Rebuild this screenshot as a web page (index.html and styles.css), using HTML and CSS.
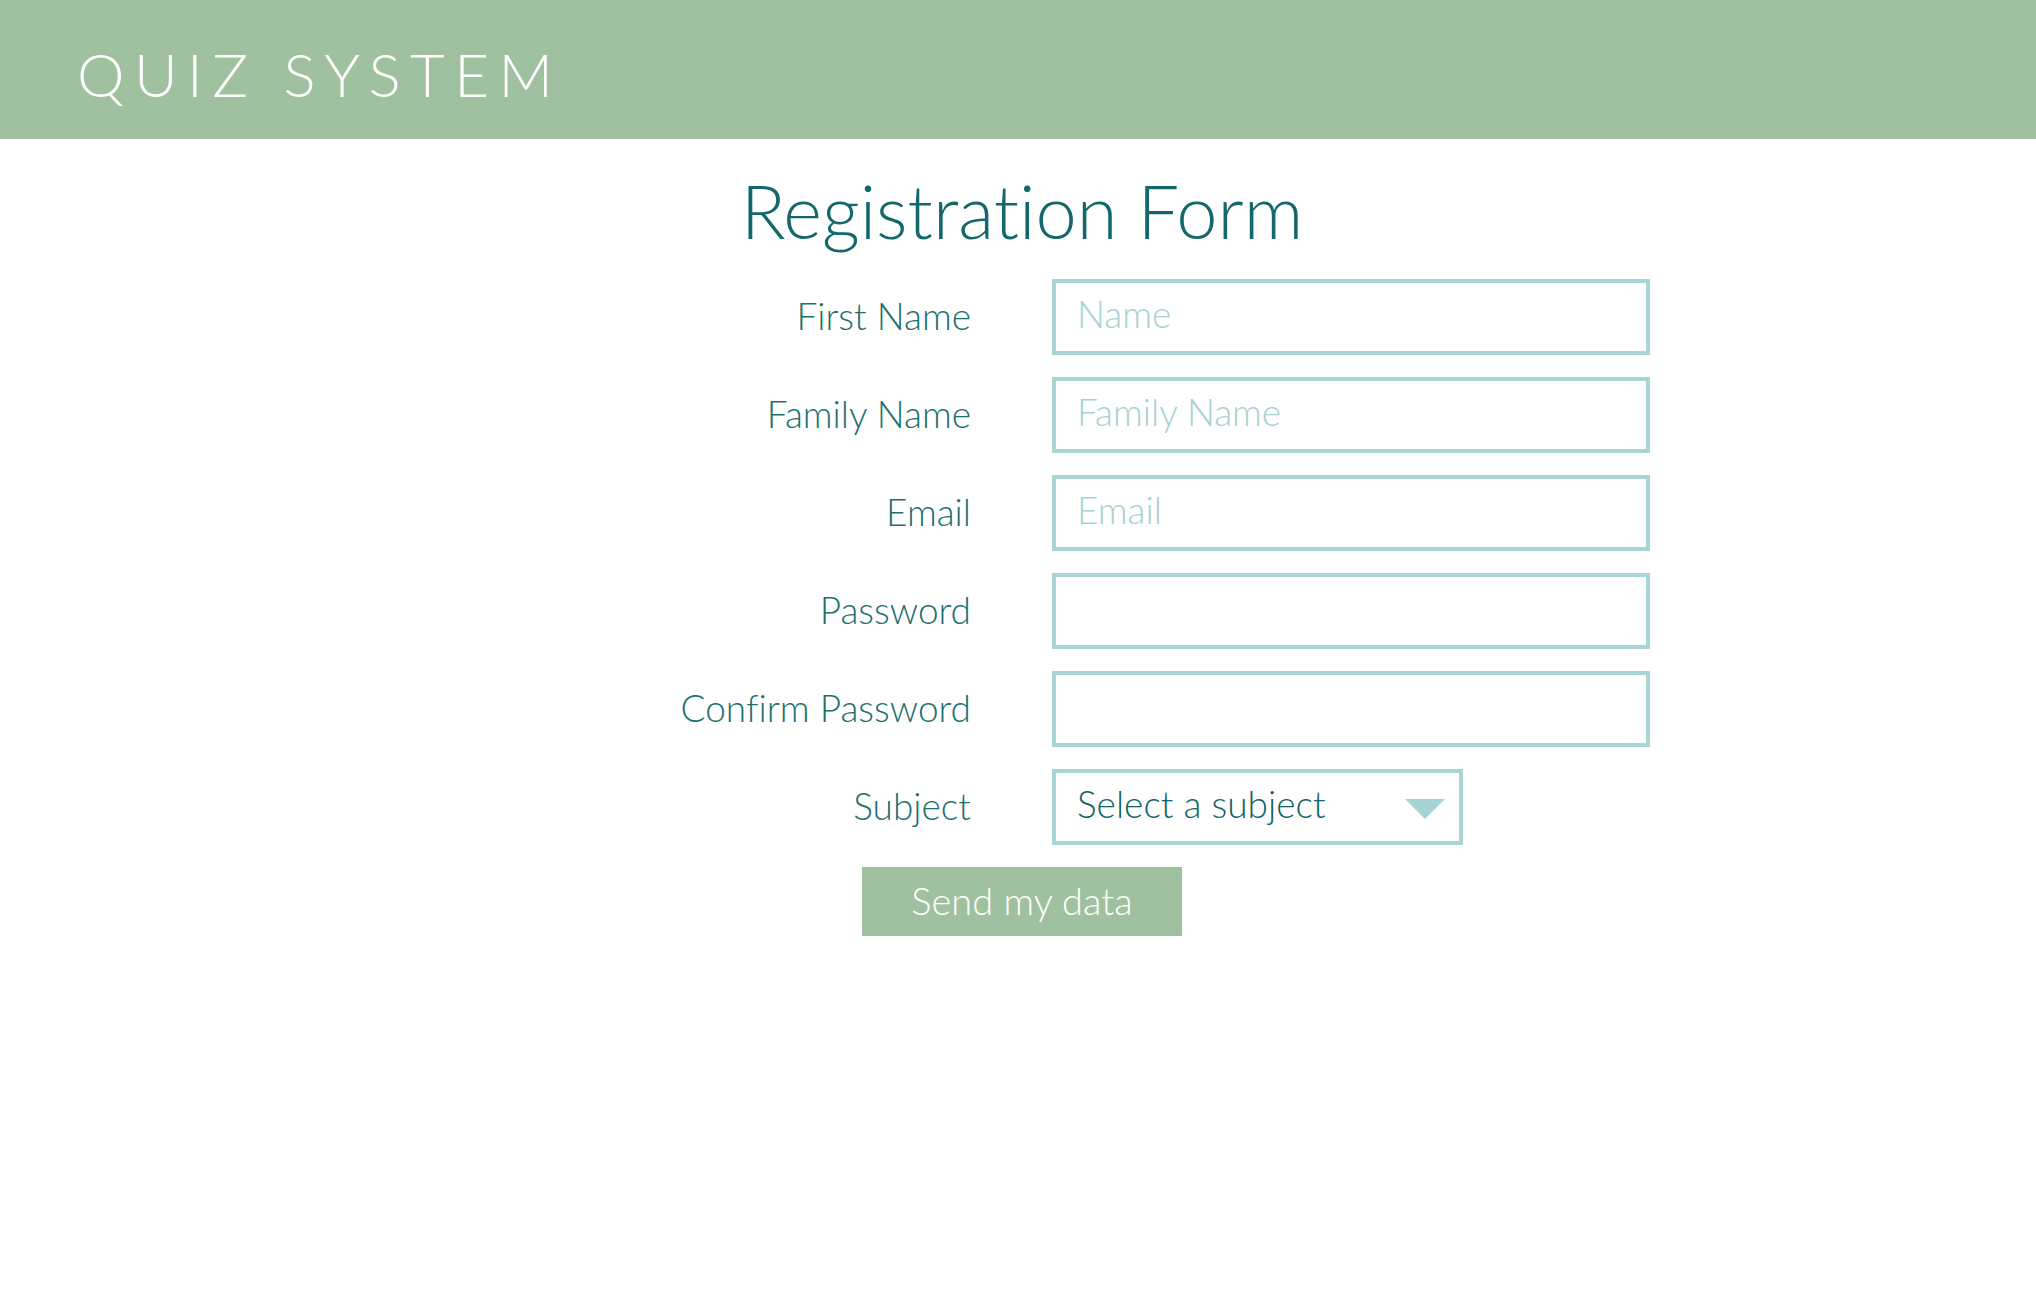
FILE: index.html
```html
<!DOCTYPE html>
<html lang="en">
<head>
<meta charset="utf-8">
<title>Quiz System - Registration</title>
<link rel="stylesheet" href="styles.css">
</head>
<body>
<header class="topbar">
  <h1 class="brand">QUIZ SYSTEM</h1>
</header>
<main class="page">
  <h2 class="title">Registration Form</h2>
  <form class="form">
    <label class="label" for="fn">First Name</label>
    <input class="field" id="fn" type="text" placeholder="Name">
    <label class="label" for="ln">Family Name</label>
    <input class="field" id="ln" type="text" placeholder="Family Name">
    <label class="label" for="em">Email</label>
    <input class="field" id="em" type="email" placeholder="Email">
    <label class="label" for="pw">Password</label>
    <input class="field" id="pw" type="password">
    <label class="label" for="pw2">Confirm Password</label>
    <input class="field" id="pw2" type="password">
    <label class="label" for="sub">Subject</label>
    <div class="select-wrap">
      <select class="select" id="sub">
        <option>Select a subject</option>
      </select>
      <svg class="arrow" width="40" height="20" viewBox="0 0 40 20"><polygon points="0,0 40,0 20,20" fill="#a6d3d4"/></svg>
    </div>
  </form>
  <div class="actions">
    <button class="btn" type="button">Send my data</button>
  </div>
</main>
</body>
</html>
```
FILE: styles.css
```css
html, body {
  margin: 0;
  padding: 0;
  background: #ffffff;
}
body {
  font-family: "Lato", "Liberation Sans", sans-serif;
  font-weight: 300;
  font-variant-ligatures: none;
}
.topbar {
  height: 139px;
  background: #a0c19f;
  display: flex;
  align-items: center;
  padding-left: 77px;
}
.brand {
  margin: 8px 0 0 0;
  font-family: "Lato", sans-serif;
  font-weight: 300;
  font-size: 60px;
  letter-spacing: 9.5px;
  color: #ffffff;
  line-height: 1;
}
.page {
  display: flex;
  flex-direction: column;
  align-items: center;
}
.title {
  margin: 27px 0 23px 0;
  font-weight: 300;
  font-size: 74px;
  line-height: 90px;
  color: #14686c;
  padding-left: 8px;
  font-variant-ligatures: none;
}
.form {
  display: grid;
  grid-template-columns: 460px 598px;
  column-gap: 81px;
  row-gap: 22px;
  align-items: center;
  margin-left: 125px;
}
.label {
  justify-self: end;
  font-size: 37px;
  color: #1d706f;
  margin-top: -4px;
}
.field {
  box-sizing: border-box;
  height: 76px;
  width: 598px;
  border: 4px solid #a8d5d5;
  padding: 0 21px 8px 21px;
  font-family: inherit;
  font-weight: 300;
  font-size: 37px;
  color: #1d706f;
  background: #fff;
  outline: none;
}
.field::placeholder {
  color: #a6d2d2;
}
.select-wrap {
  position: relative;
  width: 411px;
  height: 76px;
}
.select {
  box-sizing: border-box;
  width: 411px;
  height: 76px;
  border: 4px solid #a8d5d5;
  border-radius: 0;
  padding: 0 21px 8px 21px;
  font-family: inherit;
  font-weight: 300;
  font-size: 37px;
  color: #0f6466;
  background: #fff;
  -webkit-appearance: none;
  appearance: none;
  outline: none;
}
.arrow {
  position: absolute;
  right: 18px;
  top: 30px;
}
.actions {
  margin-top: 22px;
  padding-left: 8px;
}
.btn {
  width: 320px;
  height: 69px;
  border: none;
  background: #a0c19f;
  color: #ffffff;
  font-family: inherit;
  font-weight: 300;
  font-size: 38px;
  padding-bottom: 4px;
  cursor: pointer;
}
```
